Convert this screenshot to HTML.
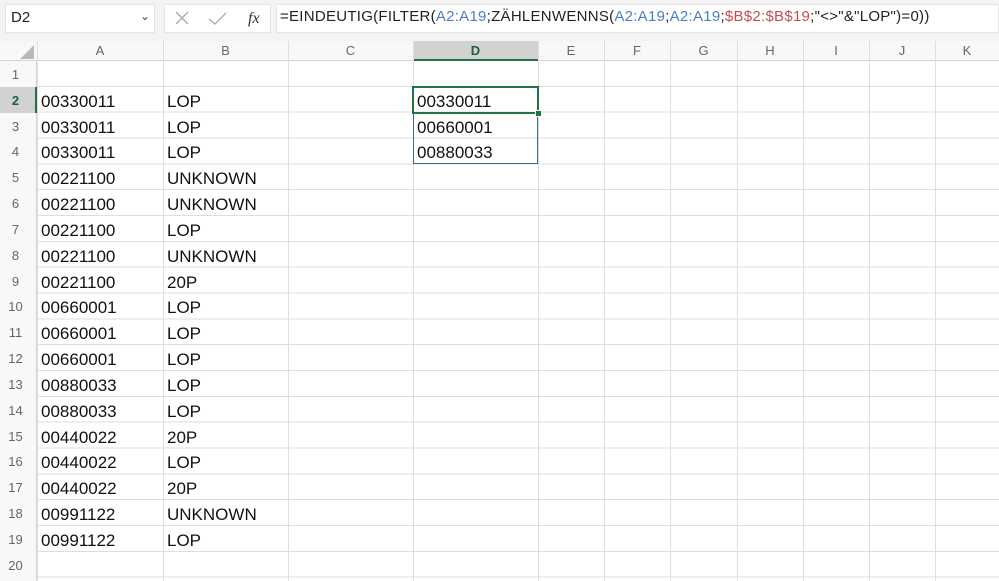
<!DOCTYPE html>
<html><head><meta charset="utf-8"><style>
body{margin:0;width:999px;height:581px;overflow:hidden;background:#fff;font-family:"Liberation Sans",sans-serif;position:relative}
.a{position:absolute}
#top{left:0;top:0;width:999px;height:41px;background:#f3f3f3}
.box{background:#fff;border:1px solid #e4e4e4;box-sizing:border-box}
#grid{left:0;top:61px;width:999px;height:520px;background:repeating-linear-gradient(to bottom,transparent 0,transparent 24.83px,#dedede 24.83px,#dedede 25.83px)}
.v{position:absolute;top:41px;width:1px;height:540px;background:#dedede}
#ch{left:0;top:41px;width:999px;height:20px;background:#f8f8f8;border-bottom:1px solid #d4d4d4;box-sizing:border-box}
.hl{position:absolute;top:41px;height:20px;line-height:20px;text-align:center;color:#666;font-size:13px}
#rh{left:0;top:61px;width:37px;height:520px;background:#f8f8f8;border-right:1px solid #d4d4d4;box-sizing:border-box}
.col{position:absolute;top:63px;line-height:25.83px;font-size:17px;color:#111;white-space:pre}
.rn{position:absolute;left:0;top:62px;width:31px;text-align:center;line-height:25.83px;font-size:13px;color:#666;white-space:pre}
</style></head><body>
<div id="top" class="a"></div>
<div class="a box" style="left:5px;top:4px;width:150px;height:29px"></div>
<div class="a" style="left:11px;top:9px;font-size:15px;color:#222">D2</div>
<div class="a" style="left:140px;top:9px;font-size:12px;color:#444">&#8964;</div>
<div class="a box" style="left:164px;top:4px;width:107px;height:29px"></div>
<svg class="a" style="left:170px;top:8px" width="100" height="22"><path d="M6 4L18 16M18 4L6 16" stroke="#aaa" stroke-width="1.3" fill="none"/><path d="M39 11L45 16L56 5" stroke="#aaa" stroke-width="1.3" fill="none"/><text x="78" y="15" font-family="Liberation Serif" font-style="italic" font-size="16" fill="#333">fx</text></svg>
<div class="a box" style="left:276px;top:4px;width:723px;height:29px"></div>
<div class="a" style="left:280px;top:8px;font-size:15px;color:#222;white-space:pre;letter-spacing:0.27px">=EINDEUTIG(FILTER(<span style="color:#4a7fc0">A2:A19</span>;ZÄHLENWENNS(<span style="color:#4a7fc0">A2:A19</span>;<span style="color:#4a7fc0">A2:A19</span>;<span style="color:#c0504d">$B$2:$B$19</span>;"&lt;&gt;"&amp;"LOP")=0))</div>
<div id="grid" class="a"></div>
<div id="ch" class="a"></div>
<div class="a" style="left:413px;top:41px;width:125px;height:20px;background:#d2d2d2;border-bottom:2px solid #217346;box-sizing:border-box"></div>
<svg class="a" style="left:20px;top:45px" width="14" height="14"><path d="M14 0L14 14L0 14Z" fill="#b9b9b9"/></svg>
<div id="rh" class="a"></div>
<div class="a" style="left:0;top:86.8px;width:37px;height:25.83px;background:#d2d2d2;border-right:2px solid #217346;box-sizing:border-box"></div>
<div class="v" style="left:37px"></div><div class="v" style="left:163px"></div><div class="v" style="left:288px"></div><div class="v" style="left:413px"></div><div class="v" style="left:538px"></div><div class="v" style="left:604px"></div><div class="v" style="left:670px"></div><div class="v" style="left:737px"></div><div class="v" style="left:803px"></div><div class="v" style="left:869px"></div><div class="v" style="left:935px"></div>
<div class="hl" style="left:37px;width:126px">A</div><div class="hl" style="left:163px;width:125px">B</div><div class="hl" style="left:288px;width:125px">C</div><div class="hl" style="left:413px;width:125px;color:#1e5e3a;font-weight:bold">D</div><div class="hl" style="left:538px;width:66px">E</div><div class="hl" style="left:604px;width:66px">F</div><div class="hl" style="left:670px;width:67px">G</div><div class="hl" style="left:737px;width:66px">H</div><div class="hl" style="left:803px;width:66px">I</div><div class="hl" style="left:869px;width:66px">J</div><div class="hl" style="left:935px;width:64px">K</div>
<div class="rn">1
<b style="color:#1e5e3a">2</b>
3
4
5
6
7
8
9
10
11
12
13
14
15
16
17
18
19
20</div>
<div class="col" style="left:41px">
00330011
00330011
00330011
00221100
00221100
00221100
00221100
00221100
00660001
00660001
00660001
00880033
00880033
00440022
00440022
00440022
00991122
00991122</div>
<div class="col" style="left:167px">
LOP
LOP
LOP
UNKNOWN
UNKNOWN
LOP
UNKNOWN
20P
LOP
LOP
LOP
LOP
LOP
20P
LOP
20P
UNKNOWN
LOP</div>
<div class="a" style="left:413px;top:86.8px;width:125px;height:77.5px;border:1px solid #3a6b8c;box-sizing:border-box"></div>
<div class="a" style="left:412px;top:86px;width:127px;height:27.5px;border:2px solid #217346;box-sizing:border-box"></div>
<div class="a" style="left:535px;top:110px;width:5px;height:5px;background:#217346;border:1px solid #fff"></div>
<div class="col" style="left:417px">
00330011
00660001
00880033</div>
</body></html>
